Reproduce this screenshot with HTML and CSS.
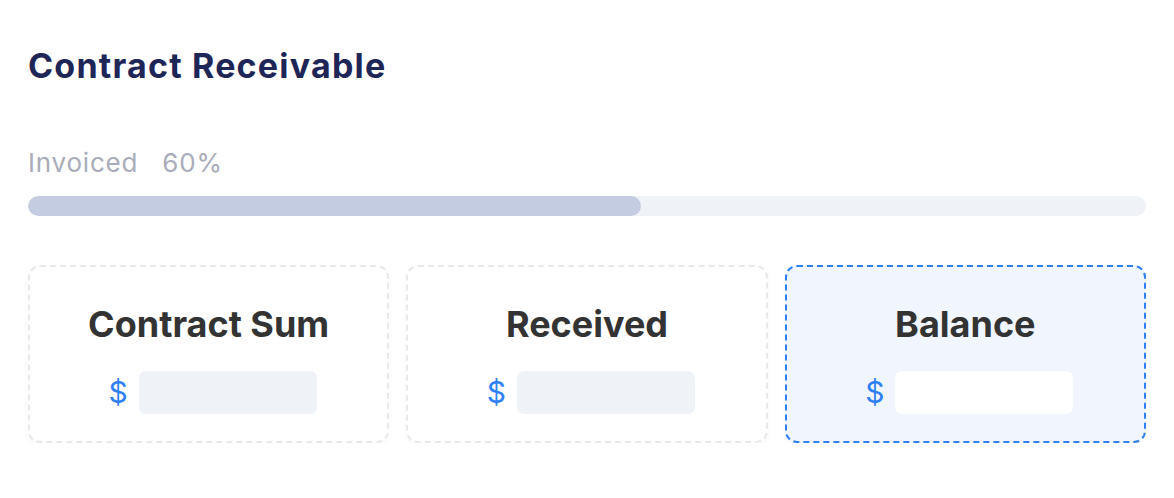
FILE: index.html
```html
<!DOCTYPE html>
<html>
<head>
<meta charset="utf-8">
<link rel="stylesheet" href="styles.css">
</head>
<body>
<div class="panel">
  <h1 class="title">Contract Receivable</h1>
  <div class="progress-label"><span>Invoiced</span><span>60%</span></div>
  <div class="track"><div class="fill" style="width:54.8%"></div></div>
  <div class="cards">
    <div class="card">
      <div class="card-title">Contract Sum</div>
      <div class="amount"><span class="cur">$</span><div class="field"></div></div>
    </div>
    <div class="card">
      <div class="card-title">Received</div>
      <div class="amount"><span class="cur">$</span><div class="field"></div></div>
    </div>
    <div class="card card-active">
      <div class="card-title">Balance</div>
      <div class="amount"><span class="cur">$</span><div class="field"></div></div>
    </div>
  </div>
</div>
</body>
</html>
```
FILE: styles.css
```css
* { box-sizing: border-box; }
html, body { margin: 0; padding: 0; background: #fff; }
body { font-family: Inter, "Noto Sans", sans-serif; }
.panel { padding: 44px 28px 0 28px; }
.title {
  margin: 0;
  font-size: 34px;
  font-weight: 700;
  color: #1e2557;
  line-height: 44px;
  letter-spacing: 1.2px;
}
.progress-label {
  margin-top: 60px;
  display: flex;
  gap: 24px;
  font-size: 26px;
  line-height: 30px;
  color: #a9acb9;
  letter-spacing: 0.8px;
}
.track {
  margin-top: 18px;
  height: 20px;
  border-radius: 10px;
  background: #eff3f7;
  overflow: hidden;
}
.fill { height: 100%; background: #c4cce1; border-radius: 10px; }
.cards {
  margin-top: 49px;
  display: grid;
  grid-template-columns: repeat(3, 1fr);
  gap: 17px;
}
.card {
  height: 178px;
  border: 2px dashed #e9e9ec;
  border-radius: 12px;
  box-shadow: 0 3px 6px rgba(0,0,0,0.03);
  display: flex;
  flex-direction: column;
  align-items: center;
  padding-top: 36px;
}
.card-active { border-color: #2f80f6; background: #f0f5fe; }
.card-title {
  font-size: 36px;
  font-weight: 700;
  color: #333;
  line-height: 42px;
}
.amount {
  margin-top: 26px;
  padding-left: 8px;
  display: flex;
  align-items: center;
  gap: 11px;
}
.cur { color: #2f80f6; font-size: 30px; line-height: 43px; }
.field { width: 178px; height: 43px; border-radius: 7px; background: #eff3f7; }
.card-active .field { background: #fff; }
```
